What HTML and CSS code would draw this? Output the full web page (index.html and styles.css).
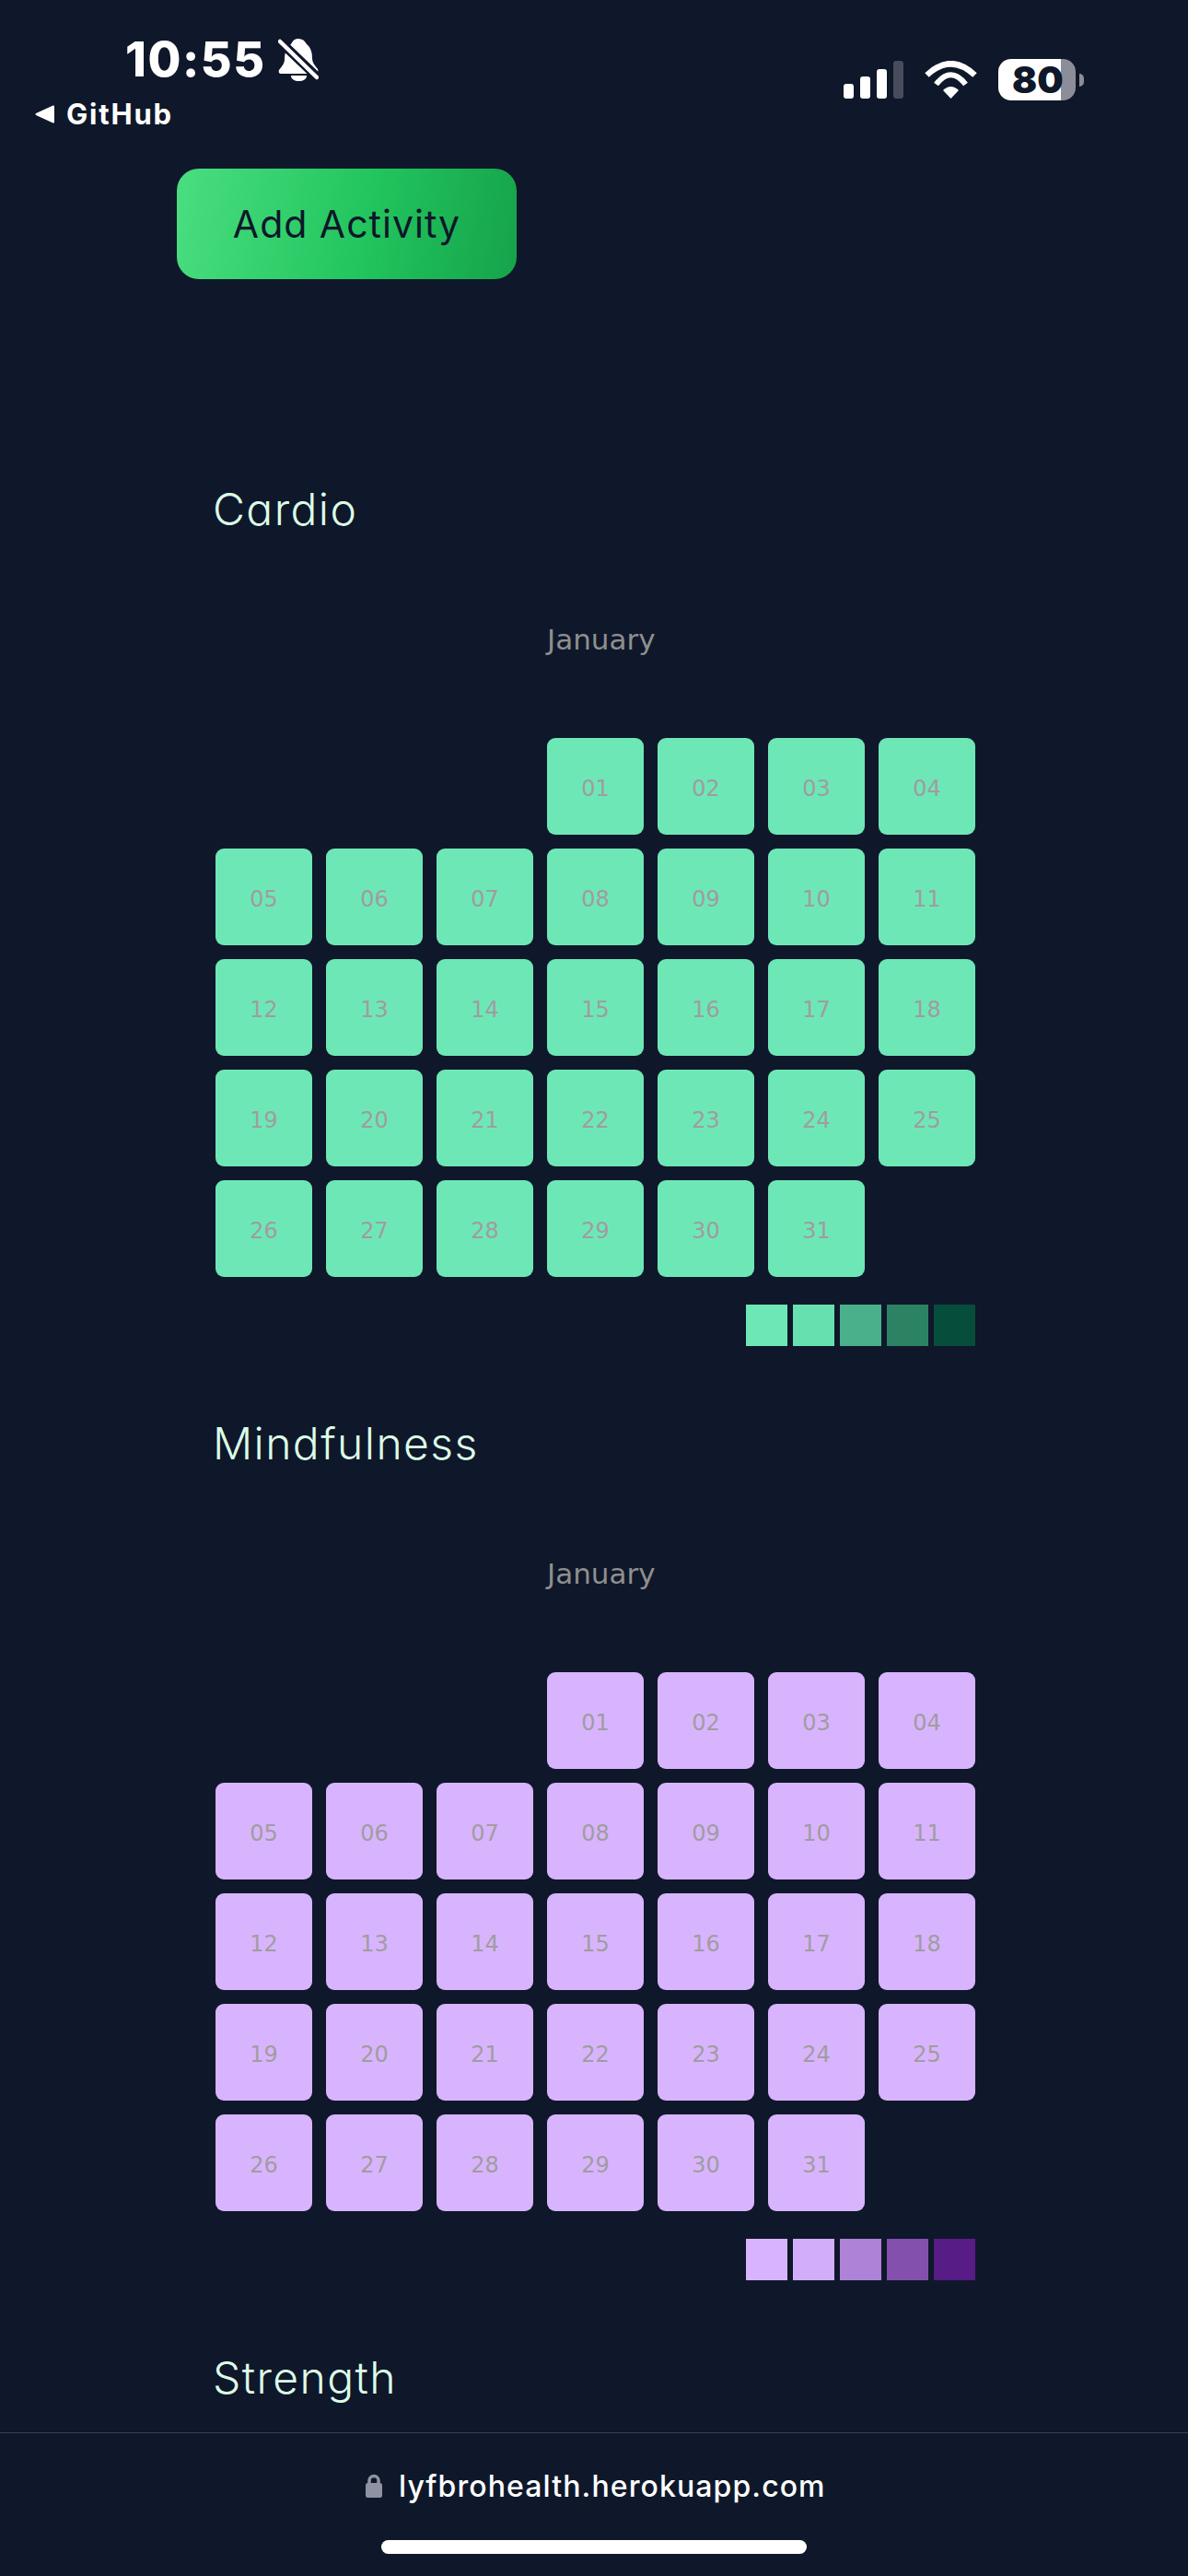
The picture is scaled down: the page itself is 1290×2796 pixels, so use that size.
FILE: index.html
```html
<!DOCTYPE html>
<html lang="en">
<head>
  <meta charset="UTF-8">
  <meta name="viewport" content="width=device-width, initial-scale=1.0">
  <title>Lyfbro Health</title>
  <link rel="stylesheet" href="styles.css">
</head>
<body>
  <header class="status-bar">
    <div class="status-left">
      <div class="clock">
        <span class="time">10:55</span>
        <svg class="bell" viewBox="0 0 44 46" aria-hidden="true">
          <path fill="#fff" d="M22 0c4 0 7 2 9 6 5 4 6 10 6 15 0 5 3 8 6 12 1 2 0 4-2 5H3c-2 0-3-2-2-4 3-4 6-7 6-12 0-6 2-12 7-16 2-4 4-6 8-6z"/>
          <path fill="#fff" d="M14 40h17c0 4-4 6-8.500 6S14 44 14 40z"/>
          <path stroke="#0f172a" stroke-width="10" d="M-1 0 46 45"/>
          <path stroke="#fff" stroke-width="4.500" stroke-linecap="round" d="M2 3 42 42"/>
        </svg>
      </div>
      <div class="back-link">
        <svg class="back-arrow" viewBox="0 0 21 20" aria-hidden="true">
          <path fill="#fff" stroke="#fff" stroke-width="2" stroke-linejoin="round" d="M1.500 10 20 1.500v17z"/>
        </svg>
        <span>GitHub</span>
      </div>
    </div>
    <div class="status-right">
      <div class="signal">
        <span class="bar bar-1"></span>
        <span class="bar bar-2"></span>
        <span class="bar bar-3"></span>
        <span class="bar bar-4"></span>
      </div>
      <svg class="wifi" viewBox="0 0 57 41" aria-hidden="true">
        <path fill="none" stroke="#fff" stroke-width="6.500" d="M2.500 15.500Q28.500 -9 54.500 15.500"/>
        <path fill="none" stroke="#fff" stroke-width="6" d="M12.500 25.500Q28.500 5 44.500 25.500"/>
        <path fill="#fff" d="M20 32Q28.500 24 37 32L28.500 41z"/>
      </svg>
      <div class="battery">
        <div class="battery-body"><span class="battery-level">80</span></div>
        <span class="battery-nub"></span>
      </div>
    </div>
  </header>

  <button class="add-btn">Add Activity</button>

  <main class="activities">
    <section class="activity cardio">
      <h2>Cardio</h2>
      <p class="month">January</p>
      <div class="calendar">
        <div class="day first">01</div><div class="day">02</div><div class="day">03</div><div class="day">04</div>
        <div class="day">05</div><div class="day">06</div><div class="day">07</div><div class="day">08</div><div class="day">09</div><div class="day">10</div><div class="day">11</div>
        <div class="day">12</div><div class="day">13</div><div class="day">14</div><div class="day">15</div><div class="day">16</div><div class="day">17</div><div class="day">18</div>
        <div class="day">19</div><div class="day">20</div><div class="day">21</div><div class="day">22</div><div class="day">23</div><div class="day">24</div><div class="day">25</div>
        <div class="day">26</div><div class="day">27</div><div class="day">28</div><div class="day">29</div><div class="day">30</div><div class="day">31</div>
      </div>
      <div class="legend">
        <span class="step-1"></span><span class="step-2"></span><span class="step-3"></span><span class="step-4"></span><span class="step-5"></span>
      </div>
    </section>

    <section class="activity mindfulness">
      <h2>Mindfulness</h2>
      <p class="month">January</p>
      <div class="calendar">
        <div class="day first">01</div><div class="day">02</div><div class="day">03</div><div class="day">04</div>
        <div class="day">05</div><div class="day">06</div><div class="day">07</div><div class="day">08</div><div class="day">09</div><div class="day">10</div><div class="day">11</div>
        <div class="day">12</div><div class="day">13</div><div class="day">14</div><div class="day">15</div><div class="day">16</div><div class="day">17</div><div class="day">18</div>
        <div class="day">19</div><div class="day">20</div><div class="day">21</div><div class="day">22</div><div class="day">23</div><div class="day">24</div><div class="day">25</div>
        <div class="day">26</div><div class="day">27</div><div class="day">28</div><div class="day">29</div><div class="day">30</div><div class="day">31</div>
      </div>
      <div class="legend">
        <span class="step-1"></span><span class="step-2"></span><span class="step-3"></span><span class="step-4"></span><span class="step-5"></span>
      </div>
    </section>

    <section class="activity">
      <h2>Strength</h2>
    </section>
  </main>

  <footer class="url-bar">
    <div class="url">
      <svg class="lock" viewBox="0 0 18 26" aria-hidden="true">
        <path fill="none" stroke="#8e92a1" stroke-width="3.500" d="M4 12V7.500a5 5 0 0 1 10 0V12"/>
        <rect fill="#8e92a1" y="10" width="18" height="16" rx="2.500"/>
      </svg>
      <span>lyfbrohealth.herokuapp.com</span>
    </div>
    <div class="home-bar"></div>
  </footer>
</body>
</html>
```

FILE: styles.css
```css
body {
  margin: 0;
  width: 1290px;
  height: 2796px;
  overflow: hidden;
  position: relative;
  background-color: #0f172a;
  font-family: Inter, sans-serif;
}

.status-bar {
  height: 183px;
  display: flex;
  justify-content: space-between;
  box-sizing: border-box;
}

.status-left {
  padding-left: 38px;
}

.clock {
  display: flex;
  align-items: flex-start;
  padding: 42px 0 0 98px;
  height: 58px;
}

.time {
  color: #fff;
  font-size: 52px;
  font-weight: 800;
  line-height: 46px;
  letter-spacing: 1.500px;
}

.bell {
  width: 44px;
  height: 46px;
  margin-left: 13px;
}

.back-link {
  display: flex;
  align-items: center;
  margin-top: 7px;
  color: #fff;
  font-size: 31px;
  font-weight: 700;
  line-height: 34px;
  letter-spacing: 1.800px;
}

.back-arrow {
  width: 21px;
  height: 20px;
  margin-right: 13px;
}

.status-right {
  display: flex;
  align-items: flex-start;
  padding: 64px 113px 0 0;
}

.signal {
  display: flex;
  align-items: flex-end;
  gap: 7px;
  height: 41px;
  margin-top: 2px;
}

.bar {
  width: 11px;
  background-color: #fff;
  border-radius: 3px;
}

.bar-1 { height: 16px; }
.bar-2 { height: 24px; }
.bar-3 { height: 32px; }
.bar-4 { height: 41px; background-color: #474c5a; }

.wifi {
  width: 57px;
  height: 41px;
  margin: 2px 23px 0;
}

.battery {
  display: flex;
  align-items: center;
}

.battery-body {
  width: 84px;
  height: 45px;
  border-radius: 14px;
  background: linear-gradient(90deg, #fff 81%, #8b8e98 81%);
}

.battery-level {
  display: block;
  padding-left: 15px;
  color: #0f172a;
  font-size: 40px;
  font-weight: 900;
  line-height: 45px;
}

.battery-nub {
  width: 5px;
  height: 14px;
  margin-left: 4px;
  background-color: #8b8e98;
  border-radius: 0 7px 7px 0;
}

.add-btn {
  display: block;
  width: 369px;
  height: 120px;
  margin: 0 0 0 192px;
  padding: 0;
  border: none;
  border-radius: 24px;
  background: linear-gradient(100deg, #4ade80 0%, #22c55e 55%, #16a34a 100%);
  color: #0f172a;
  font-family: Inter, sans-serif;
  font-size: 41px;
  font-weight: 400;
  letter-spacing: 1px;
}

.activities {
  padding: 214px 0 0 234px;
  width: 825px;
}

.activity {
  margin-bottom: 70px;
}

.activity h2 {
  margin: 0 0 83px -3px;
  color: #dcfce7;
  font-family: Inter, sans-serif;
  font-size: 48px;
  font-weight: 350;
  line-height: 72px;
  letter-spacing: 1.400px;
  font-feature-settings: "cv11";
}

.month {
  margin: 0 0 85px;
  padding-left: 360px;
  color: #8f8f8f;
  font-family: "DejaVu Sans", sans-serif;
  font-size: 31px;
  line-height: 44px;
}

.calendar {
  display: grid;
  grid-template-columns: repeat(7, 105px);
  grid-auto-rows: 105px;
  gap: 15px;
}

.day {
  display: flex;
  align-items: center;
  justify-content: center;
  box-sizing: border-box;
  padding-top: 4px;
  border-radius: 9px;
  color: #a09ca0;
  font-family: "DejaVu Sans", sans-serif;
  font-size: 24px;
}

.first {
  grid-column-start: 4;
}

.cardio .day { background-color: #6ee7b7; }
.mindfulness .day { background-color: #d8b4fe; }

.legend {
  display: flex;
  justify-content: flex-end;
  gap: 6px;
  margin-top: 30px;
}

.legend span {
  width: 45px;
  height: 45px;
}

.cardio .step-1 { background-color: #6ee7b7; }
.cardio .step-2 { background-color: #67e0b0; }
.cardio .step-3 { background-color: #4ab08b; }
.cardio .step-4 { background-color: #2c8364; }
.cardio .step-5 { background-color: #064e3b; }

.mindfulness .step-1 { background-color: #d8b4fe; }
.mindfulness .step-2 { background-color: #d2aefa; }
.mindfulness .step-3 { background-color: #ae82d6; }
.mindfulness .step-4 { background-color: #8350ae; }
.mindfulness .step-5 { background-color: #581c87; }

/* browser chrome sits over the page */
.url-bar {
  position: absolute;
  left: 0;
  right: 0;
  bottom: 0;
  height: 156px;
  box-sizing: border-box;
  border-top: 1px solid #3a404e;
  background-color: #0f182b;
}

.url {
  display: flex;
  align-items: center;
  gap: 18px;
  margin: 32px 0 0 397px;
  height: 50px;
  color: #fff;
  font-size: 32px;
  font-weight: 500;
  letter-spacing: 1.100px;
}

.lock {
  width: 18px;
  height: 26px;
}

.home-bar {
  width: 462px;
  height: 15px;
  margin: 34px 0 0 414px;
  background-color: #fff;
  border-radius: 8px;
}
```
